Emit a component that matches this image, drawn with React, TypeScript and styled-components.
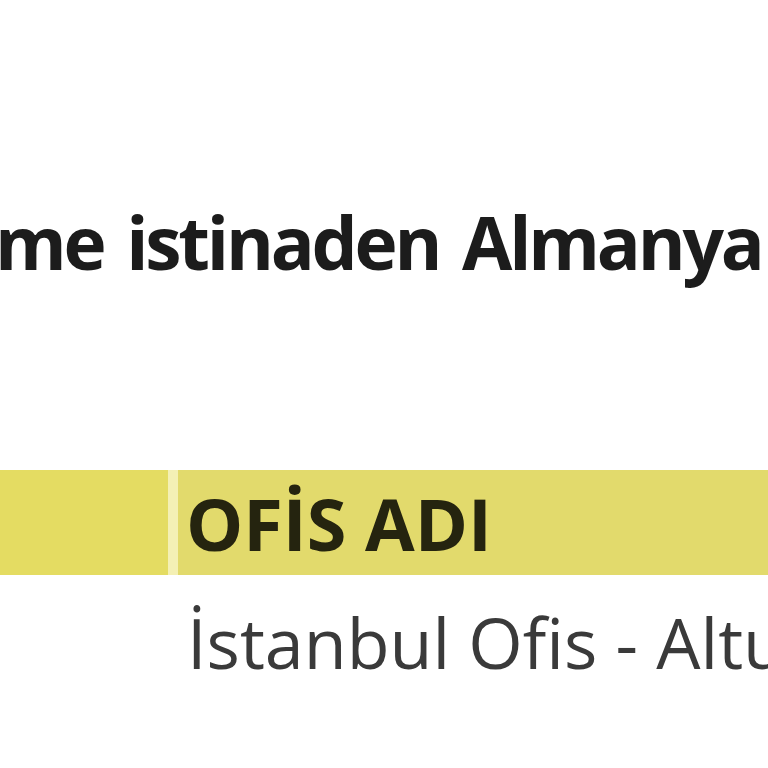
import React from "react";
import styled, { createGlobalStyle } from "styled-components";

const GlobalStyle = createGlobalStyle`
  html, body {
    margin: 0;
    padding: 0;
    background: #ffffff;
    overflow: hidden;
  }
`;

const Page = styled.div`
  width: 768px;
  height: 768px;
  overflow: hidden;
  background: #ffffff;
  font-family: "Open Sans", "Noto Sans", sans-serif;
  display: flex;
  flex-direction: column;
`;

const Heading = styled.h1`
  margin: 205px 0 0 -5px;
  font-size: 73px;
  line-height: 1;
  font-weight: 700;
  color: #1c1c1c;
  white-space: nowrap;
  letter-spacing: -3.2px;
  word-spacing: 7px;
`;

const Table = styled.div`
  margin-top: 192px;
  display: grid;
  grid-template-columns: 168px 1fr;
`;

const HeadCell = styled.div<{ $first?: boolean }>`
  height: 105px;
  display: flex;
  align-items: center;
  background: ${(p) => (p.$first ? "#e4dc62" : "#e2da6c")};
  border-left: ${(p) => (p.$first ? "none" : "10px solid #f4f0b4")};
  padding-left: ${(p) => (p.$first ? "0" : "8px")};
  font-size: 72px;
  line-height: 1;
  font-weight: 700;
  color: #25240f;
  white-space: nowrap;
`;

const BodyCell = styled.div<{ $first?: boolean }>`
  padding: 32px 0 0 ${(p) => (p.$first ? "0" : "19px")};
  font-size: 70px;
  line-height: 1;
  font-weight: 400;
  color: #3a3a3a;
  white-space: nowrap;
`;

export default function App() {
  return (
    <>
      <GlobalStyle />
      <Page>
        <Heading>me istinaden Almanya</Heading>
        <Table>
          <HeadCell $first />
          <HeadCell>OFİS ADI</HeadCell>
          <BodyCell $first />
          <BodyCell>İstanbul Ofis - Altunizade</BodyCell>
        </Table>
      </Page>
    </>
  );
}
